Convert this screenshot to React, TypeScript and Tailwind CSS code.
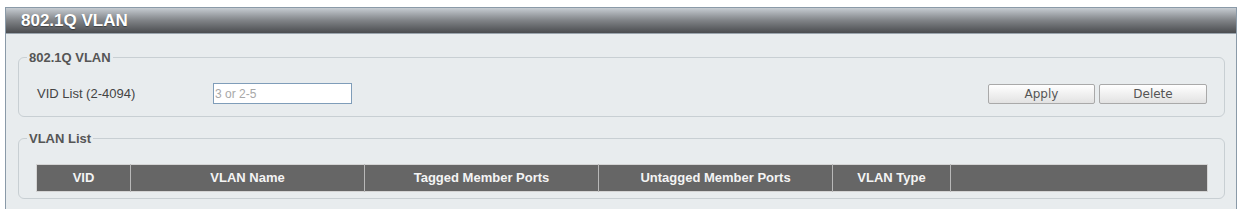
export default function App() {
  const columnas = [
    { titulo: "VID", ancho: "w-[94px]" },
    { titulo: "VLAN Name", ancho: "w-[234px]" },
    { titulo: "Tagged Member Ports", ancho: "w-[234px]" },
    { titulo: "Untagged Member Ports", ancho: "w-[234px]" },
    { titulo: "VLAN Type", ancho: "w-[118px]" },
    { titulo: "", ancho: "" },
  ];

  return (
    <div className="min-h-screen bg-white pt-[7px] pl-[5px] font-['Liberation_Sans',Arial,sans-serif]">
      <div className="w-[1232px] border border-[#8a9aa8] bg-[#e8ecee]">
        {/* barra de título */}
        <div className="flex h-[26px] items-center border-b border-[#9aa4ad] bg-gradient-to-b from-[#c6ccd2] via-[#808387] to-[#4b4d50] pl-[15px]">
          <h1 className="text-[17px] font-bold leading-none text-white [text-shadow:0_1px_1px_rgba(0,0,0,0.4)]">
            802.1Q VLAN
          </h1>
        </div>

        <div className="pr-[11px] pb-[20px] pl-[12px] pt-[16px]">
          <fieldset className="h-[67px] rounded-[6px] border border-[#c8cfd3] pr-[17px] pl-[8px]">
            <legend className="px-[2px] text-[13px] font-bold leading-[15px] text-[#555]">802.1Q VLAN</legend>
            <div className="mt-[18px] flex items-center pl-[10px]">
              <span className="w-[176px] text-[13px] text-[#444]">VID List (2-4094)</span>
              <input
                type="text"
                placeholder="3 or 2-5"
                className="h-[21px] w-[139px] border border-[#7f9db9] bg-white px-[1px] text-[12px] text-[#444] outline-none placeholder:text-[#a8a8a8]"
              />
              <div className="ml-auto flex gap-[4px]">
                <button className="h-[20px] w-[107px] rounded-[2px] border border-[#a9a9a9] bg-gradient-to-b from-white to-[#e2e2e2] text-[12px] text-[#555] font-['DejaVu_Sans',Verdana,sans-serif]">
                  Apply
                </button>
                <button className="h-[20px] w-[108px] rounded-[2px] border border-[#a9a9a9] bg-gradient-to-b from-white to-[#e2e2e2] text-[12px] text-[#555] font-['DejaVu_Sans',Verdana,sans-serif]">
                  Delete
                </button>
              </div>
            </div>
          </fieldset>

          <fieldset className="mt-[14px] h-[68px] rounded-[6px] border border-[#c8cfd3] pr-[16px] pl-[17px]">
            <legend className="ml-[-9px] px-[2px] text-[13px] font-bold leading-[15px] text-[#555]">VLAN List</legend>
            <table className="mt-[18px] w-full table-fixed border-collapse border border-[#d4d4d4]">
              <thead>
                <tr className="h-[27px] bg-[#666666]">
                  {columnas.map((c, i) => (
                    <th
                      key={i}
                      className={`${c.ancho} border-l border-[#b8b8b8] text-center text-[13px] font-bold text-[#f4f4f4] first:border-l-0`}
                    >
                      {c.titulo}
                    </th>
                  ))}
                </tr>
              </thead>
            </table>
          </fieldset>
        </div>
      </div>
    </div>
  );
}
